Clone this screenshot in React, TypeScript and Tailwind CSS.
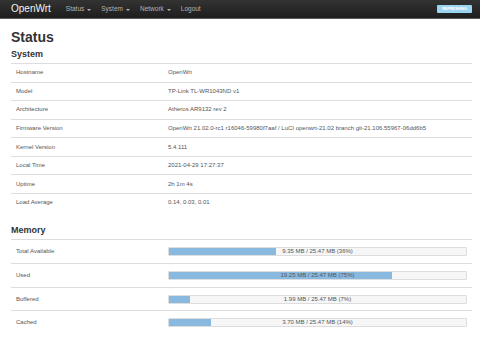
import React from "react";

const systemRows: [string, string][] = [
    ["Hostname", "OpenWrt"],
    ["Model", "TP-Link TL-WR1043ND v1"],
    ["Architecture", "Atheros AR9132 rev 2"],
    [
        "Firmware Version",
        "OpenWrt 21.02.0-rc1 r16046-59980f7aaf / LuCI openwrt-21.02 branch git-21.106.55967-06dd6b5",
    ],
    ["Kernel Version", "5.4.111"],
    ["Local Time", "2021-04-29 17:27:37"],
    ["Uptime", "2h 1m 4s"],
    ["Load Average", "0.14, 0.03, 0.01"],
];

const memoryRows: { label: string; text: string; pct: number }[] = [
    { label: "Total Available", text: "9.35 MB / 25.47 MB (36%)", pct: 36 },
    { label: "Used", text: "19.25 MB / 25.47 MB (75%)", pct: 75 },
    { label: "Buffered", text: "1.99 MB / 25.47 MB (7%)", pct: 7 },
    { label: "Cached", text: "3.70 MB / 25.47 MB (14%)", pct: 14 },
];

function NavItem({ label, caret }: { label: string; caret?: boolean }) {
    return (
        <div className="flex items-center text-[6.5px] text-[#b4b4b4]">
            <span>{label}</span>
            {caret && (
                <span className="ml-[3px] mt-[1px] w-0 h-0 border-t-[2px] border-t-[#b4b4b4] border-x-[2px] border-x-transparent" />
            )}
        </div>
    );
}

export default function App() {
    return (
        <div
            className="w-[480px] h-[337px] overflow-hidden bg-white"
            style={{ fontFamily: '"Liberation Sans", Arial, sans-serif' }}
        >
            <header className="h-[19px] bg-gradient-to-b from-[#333] to-[#1e1e1e] border-b border-b-[#5a5a5a] flex items-center pl-[11px] pr-[8px]">
                <span className="text-[10px] leading-none text-[#f2f2f2]">OpenWrt</span>
                <nav className="flex items-center gap-[10px] ml-[15px]">
                    <NavItem label="Status" caret />
                    <NavItem label="System" caret />
                    <NavItem label="Network" caret />
                    <NavItem label="Logout" />
                </nav>
                <span className="ml-auto h-[8px] w-[35px] bg-[#9ad4f0] rounded-[1px] flex items-center justify-center text-[4px] font-bold text-white tracking-tight">
                    REFRESHING
                </span>
            </header>

            <main className="ml-[11px] mr-[8px] text-[#555]">
                <h2 className="mt-[11px] text-[14px] leading-[14px] font-bold text-[#333]">Status</h2>

                <h3 className="mt-[5.5px] text-[9px] leading-[9px] font-bold text-[#333]">System</h3>
                <div className="mt-[4.5px] text-[6px]">
                    {systemRows.map(([k, v]) => (
                        <div key={k} className="h-[18.57px] border-t border-t-[#ddd] flex items-center">
                            <div className="w-[152px] pl-[5px] shrink-0">{k}</div>
                            <div className="pl-[5px] whitespace-nowrap">{v}</div>
                        </div>
                    ))}
                </div>

                <h3 className="mt-[14.4px] text-[9px] leading-[9px] font-bold text-[#333]">Memory</h3>
                <div className="mt-[4.5px] text-[6px]">
                    {memoryRows.map((r) => (
                        <div key={r.label} className="h-[23.67px] border-t border-t-[#ddd] flex items-center">
                            <div className="w-[152px] pl-[5px] shrink-0">{r.label}</div>
                            <div className="flex-1 pl-[5px] pr-[5px]">
                                <div className="relative h-[9px] bg-[#f6f6f6] border border-[#ddd] rounded-[1px] overflow-hidden">
                                    <div className="h-full bg-[#8ab9df]" style={{ width: `${r.pct}%` }} />
                                    <div className="absolute inset-0 flex items-center justify-center text-[#555]">
                                        {r.text}
                                    </div>
                                </div>
                            </div>
                        </div>
                    ))}
                </div>
            </main>
        </div>
    );
}
